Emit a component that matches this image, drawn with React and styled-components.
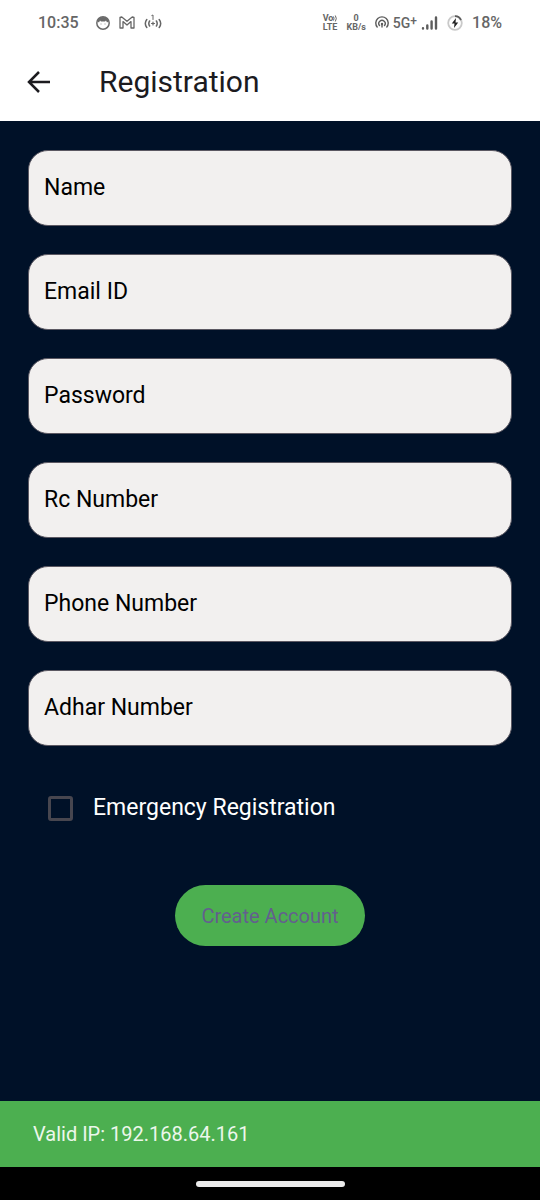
import React, { useState } from "react";
import styled, { createGlobalStyle } from "styled-components";

const GlobalStyle = createGlobalStyle`
  *, *::before, *::after { box-sizing: border-box; }
  body { margin: 0; background: #001128; font-family: Roboto, sans-serif; }
  button, input { font: inherit; }
`;

const Screen = styled.div`
  min-height: 100vh;
  display: flex;
  flex-direction: column;
  background: #001128;
`;

const StatusBar = styled.div`
  height: 45px;
  padding: 0 38px;
  display: flex;
  align-items: center;
  justify-content: space-between;
  background: #fff;
  color: #666;
  font-size: 16px;
  font-weight: 500;
`;

const StatusGroup = styled.div`
  display: flex;
  align-items: center;
  gap: ${(p) => p.$gap}px;
`;

const Clock = styled.time`
  margin-right: 8px;
`;

const Stacked = styled.span`
  display: flex;
  flex-direction: column;
  align-items: center;
  font-size: 9px;
  line-height: 9px;
  font-weight: 700;
`;

const VoiceLine = styled.span`
  display: flex;
  align-items: center;
`;

const Network = styled.span`
  display: flex;
  align-items: center;
  gap: 4px;
  font-size: 14px;
`;

const NetworkType = styled.span`
  display: flex;
`;

const Plus = styled.span`
  font-size: 12px;
  line-height: 12px;
`;

const AppBar = styled.header`
  height: 76px;
  padding: 0 24px 2px;
  display: flex;
  align-items: center;
  gap: 45px;
  background: #fff;
  color: #1c1b1f;
`;

const BackButton = styled.button`
  display: flex;
  padding: 0;
  border: 0;
  background: none;
  color: inherit;
`;

const Title = styled.h1`
  margin: 0;
  font-size: 30px;
  line-height: 38px;
  font-weight: 400;
`;

const Form = styled.form`
  flex: 1;
  padding: 29px 28px 0;
  display: flex;
  flex-direction: column;
`;

const Fields = styled.div`
  display: flex;
  flex-direction: column;
  gap: 28px;
`;

const TextField = styled.input`
  width: 100%;
  height: 76px;
  padding: 0 15px 2px;
  border: 1px solid #5b5862;
  border-radius: 20px;
  background: #f2f0ef;
  color: #000;
  font-size: 23px;
  outline: none;

  &::placeholder { color: #000; opacity: 1; }
  &:focus { border-color: #6750a4; }
`;

const CheckRow = styled.label`
  margin: 48px 20px 0;
  display: flex;
  align-items: center;
  gap: 20px;
  color: #fff;
  font-size: 23px;
  line-height: 28px;
`;

const Checkbox = styled.input`
  appearance: none;
  width: 25px;
  height: 25px;
  margin: 0;
  border: 3px solid #47464f;
  border-radius: 3px;

  &:checked { background: #6750a4; border-color: #6750a4; }
`;

const SubmitButton = styled.button`
  align-self: center;
  height: 61px;
  margin: 63px 0 28px;
  padding: 0 26px;
  border: 0;
  border-radius: 31px;
  background: #4caf50;
  color: #635f8e;
  font-size: 20px;
`;

const Snackbar = styled.div`
  padding: 20px 33px;
  background: #4caf50;
  color: #ecf7ec;
  font-size: 20px;
  line-height: 26px;
`;

const NavigationBar = styled.div`
  height: 33px;
  display: flex;
  align-items: center;
  justify-content: center;
  background: #000;
`;

const HomeHandle = styled.span`
  width: 149px;
  height: 6px;
  border-radius: 3px;
  background: #ebebeb;
`;

const FIELDS = [
  { name: "name", label: "Name", type: "text" },
  { name: "email", label: "Email ID", type: "email" },
  { name: "password", label: "Password", type: "password" },
  { name: "rc", label: "Rc Number", type: "text" },
  { name: "phone", label: "Phone Number", type: "tel" },
  { name: "adhar", label: "Adhar Number", type: "text" },
];

const FaceIcon = () => (
  <svg width="14" height="14" viewBox="0 0 14 14" aria-hidden="true">
    <circle cx="7" cy="7" r="6.200" fill="none" stroke="#6a6a6a" strokeWidth="1.500" />
    <path d="M1.500 5.500C2 2.500 4 1 7 1s5 1.500 5.500 4.500L11 6.500 10 4.500 9 5.500H5L4 4.500 3 6.500Z" fill="#6a6a6a" />
    <path d="M5 7.500v1M9 7.500v1" stroke="#999" />
  </svg>
);

const MailIcon = () => (
  <svg width="16" height="13" viewBox="0 0 16 13" fill="none" stroke="#666" strokeWidth="1.300" strokeLinejoin="round" aria-hidden="true">
    <path d="M1 12V1.500L2.800 1 8 5.300 13.200 1 15 1.500V12H12V5.600L8 9 4 5.600V12Z" />
  </svg>
);

const HotspotAlertIcon = () => (
  <svg width="18" height="17" viewBox="0 0 18 17" fill="none" stroke="#666" strokeWidth="1.500" strokeLinecap="round" aria-hidden="true">
    <path d="M2.800 5.500Q-.2 9.500 2.800 13.500M5.600 7Q4 9.500 5.600 12M15.200 5.500Q18.200 9.500 15.200 13.500M12.400 7Q14 9.500 12.400 12" />
    <path d="M7.800 1.500 9 1V5.500" strokeWidth="1" />
    <path d="M9 8v3M7.500 9.500h3" strokeWidth="1.200" />
  </svg>
);

const VoiceWavesIcon = () => (
  <svg width="4" height="7" viewBox="0 0 4 7" fill="none" stroke="#666" strokeWidth="1" aria-hidden="true">
    <path d="M.5 1.500Q1.500 3.500.5 5.500M2.300.5Q4.300 3.500 2.300 6.500" />
  </svg>
);

const HotspotIcon = () => (
  <svg width="14" height="14" viewBox="0 0 14 14" fill="none" stroke="#5c5c5c" strokeWidth="1.400" strokeLinecap="round" aria-hidden="true">
    <path d="M2.200 11a6.200 6.200 0 1 1 9.600 0M4.500 9.500a3.200 3.200 0 1 1 5 0" />
    <circle cx="7" cy="8" r="1.200" fill="#5c5c5c" stroke="none" />
    <path d="M7 8v3" />
  </svg>
);

const SignalIcon = () => (
  <svg width="17" height="14" viewBox="0 0 17 14" fill="none" stroke="#5c5c5c" strokeWidth="2.400" strokeLinecap="round" aria-hidden="true">
    <path d="M2 12.500v-.2M6.300 12.500V9.500M10.600 12.500V5.500M15 12.500V1.500" />
  </svg>
);

const BatteryIcon = () => (
  <svg width="16" height="16" viewBox="0 0 16 16" fill="none" aria-hidden="true">
    <circle cx="8" cy="8" r="6.800" stroke="#c9c9c9" strokeWidth="1.800" />
    <path d="M8 1.200A6.800 6.800 0 0 1 14 5" stroke="#5c5c5c" strokeWidth="1.800" />
    <path d="M9 3 4.800 8.600H7.500L7 13 11.200 7.400H8.500Z" fill="#222" />
  </svg>
);

const BackIcon = () => (
  <svg width="30" height="30" viewBox="0 0 30 30" fill="none" stroke="currentColor" strokeWidth="2.500" aria-hidden="true">
    <path d="M26 15H5.500M15 5 5 15 15 25" />
  </svg>
);

export default function App() {
  const [emergency, setEmergency] = useState(false);

  return (
    <Screen>
      <GlobalStyle />
      <StatusBar>
        <StatusGroup $gap={9}>
          <Clock>10:35</Clock>
          <FaceIcon />
          <MailIcon />
          <HotspotAlertIcon />
        </StatusGroup>
        <StatusGroup $gap={9}>
          <Stacked>
            <VoiceLine>Vo<VoiceWavesIcon /></VoiceLine>
            <span>LTE</span>
          </Stacked>
          <Stacked><span>0</span><span>KB/s</span></Stacked>
          <Network>
            <HotspotIcon />
            <NetworkType>5G<Plus>+</Plus></NetworkType>
            <SignalIcon />
          </Network>
          <BatteryIcon />
          <span>18%</span>
        </StatusGroup>
      </StatusBar>
      <AppBar>
        <BackButton type="button" aria-label="Back"><BackIcon /></BackButton>
        <Title>Registration</Title>
      </AppBar>
      <Form onSubmit={(e) => e.preventDefault()}>
        <Fields>
          {FIELDS.map((f) => (
            <TextField key={f.name} name={f.name} type={f.type} placeholder={f.label} aria-label={f.label} />
          ))}
        </Fields>
        <CheckRow>
          <Checkbox type="checkbox" checked={emergency} onChange={(e) => setEmergency(e.target.checked)} />
          Emergency Registration
        </CheckRow>
        <SubmitButton type="submit">Create Account</SubmitButton>
      </Form>
      <Snackbar role="status">Valid IP: 192.168.64.161</Snackbar>
      <NavigationBar><HomeHandle /></NavigationBar>
    </Screen>
  );
}
